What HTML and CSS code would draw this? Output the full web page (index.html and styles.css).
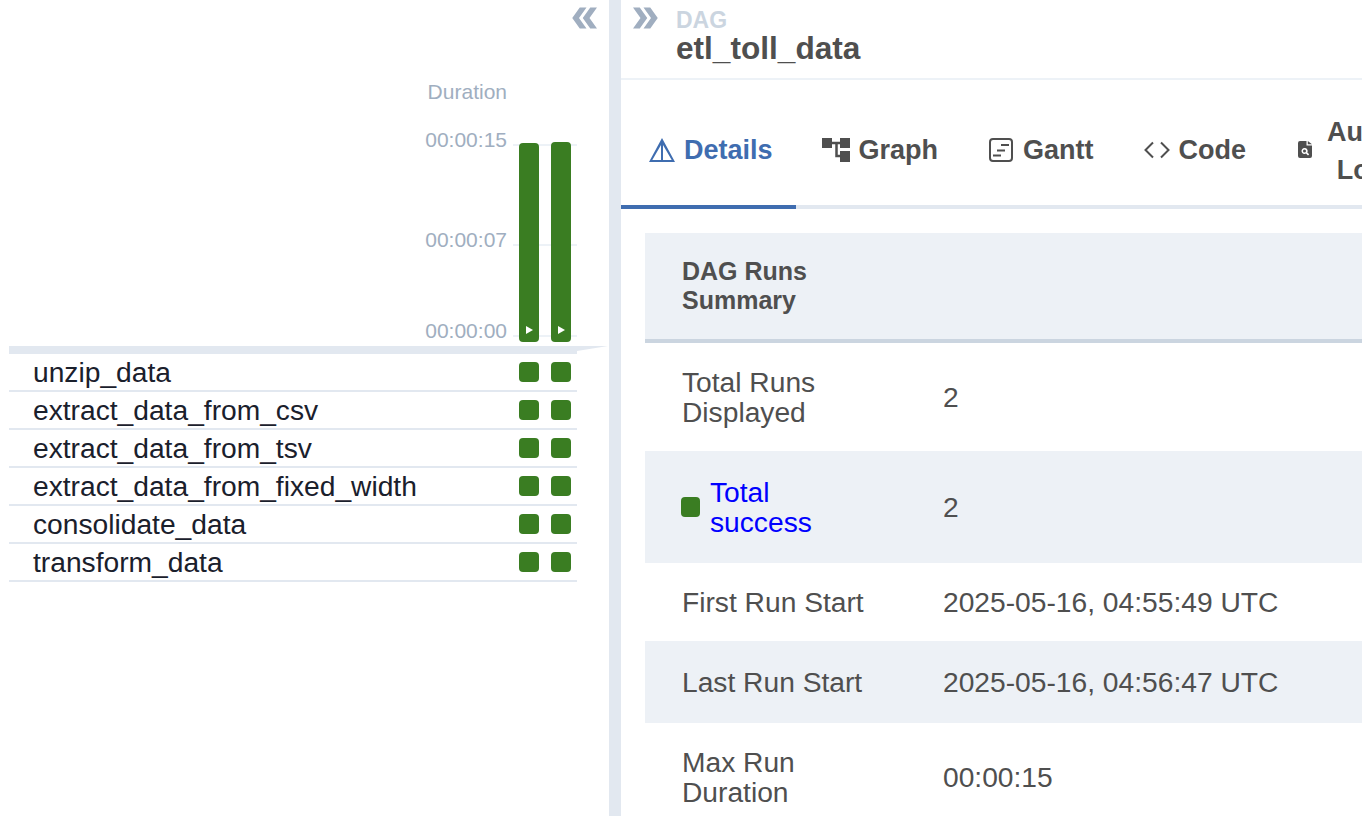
FILE: index.html
```html
<!DOCTYPE html>
<html lang="en">

<head>
  <meta charset="UTF-8">
  <link rel="stylesheet" href="styles.css">
  <title>etl_toll_data - Grid</title>
</head>

<body>
  <div class="app">
    <!-- Grid side -->
    <div class="left">
      <div class="left-top">
        <svg class="toggle flip" viewBox="0 0 24 24"><path d="M15.5 5H11l5 7-5 7h4.500l5-7z" /><path d="M8.500 5H4l5 7-5 7h4.500l5-7z" /></svg>
      </div>
      <div class="duration-title">Duration</div>
      <div class="chart">
        <div class="axis-line line-top"></div>
        <div class="axis-line line-mid"></div>
        <div class="axis-line line-bottom"></div>
        <div class="axis-labels">
          <span>00:00:15</span>
          <span class="tick-mid">00:00:07</span>
          <span class="tick-zero">00:00:00</span>
        </div>
        <div class="bars">
          <div class="bar bar-short"><span class="play"></span></div>
          <div class="bar"><span class="play"></span></div>
        </div>
      </div>
      <div class="band"><div class="band-tip"></div></div>
      <div class="task-row"><span class="task-name">unzip_data</span><span class="sq"></span><span class="sq"></span></div>
      <div class="task-row"><span class="task-name">extract_data_from_csv</span><span class="sq"></span><span class="sq"></span></div>
      <div class="task-row"><span class="task-name">extract_data_from_tsv</span><span class="sq"></span><span class="sq"></span></div>
      <div class="task-row"><span class="task-name">extract_data_from_fixed_width</span><span class="sq"></span><span class="sq"></span></div>
      <div class="task-row"><span class="task-name">consolidate_data</span><span class="sq"></span><span class="sq"></span></div>
      <div class="task-row"><span class="task-name">transform_data</span><span class="sq"></span><span class="sq"></span></div>
    </div>

    <div class="divider"></div>

    <!-- Details side -->
    <div class="right">
      <div class="header">
        <svg class="toggle" viewBox="0 0 24 24"><path d="M15.5 5H11l5 7-5 7h4.500l5-7z" /><path d="M8.500 5H4l5 7-5 7h4.500l5-7z" /></svg>
        <div class="title-block">
          <div class="dag-label">DAG</div>
          <div class="dag-name">etl_toll_data</div>
        </div>
      </div>

      <div class="tabs">
        <div class="tab active">
          <svg class="tab-icon" viewBox="0 0 26 24"><path fill-rule="evenodd" d="M13 0L0 24h26L13 0zm1 7l8.700 15H14V7zm-2 0v15H3.300L12 7z" /></svg>
          Details
        </div>
        <div class="tab">
          <svg class="tab-icon graph-icon" viewBox="0 0 28 24">
            <rect width="10" height="10" />
            <rect x="18" width="10" height="10" />
            <rect x="18" y="13" width="10" height="11" />
            <path class="link" d="M10 5h8M14.500 5v13h4" />
          </svg>
          Graph
        </div>
        <div class="tab">
          <svg class="tab-icon outline" viewBox="-1 0 26 24"><rect x="1" y="1" width="22" height="22" rx="3" /><path d="M12 7h8M8 12.500h8M4 17.500h8" /></svg>
          Gantt
        </div>
        <div class="tab">
          <svg class="tab-icon outline" viewBox="0 -4 26 24"><path d="M9 .5L1.500 8 9 15.500M17 .5L24.500 8 17 15.500" /></svg>
          Code
        </div>
        <div class="tab tab-wrap">
          <svg class="small-icon" viewBox="0 0 14 17"><path fill-rule="evenodd" d="M2 0h6.500v4.500H14V15a2 2 0 0 1-2 2H2a2 2 0 0 1-2-2V2a2 2 0 0 1 2-2zM6.500 7a3 3 0 1 0 1.500 5.600L10 14.500l1.200-1.200-1.900-1.800A3 3 0 0 0 6.500 7zm0 1.500a1.500 1.500 0 1 1 0 3 1.500 1.500 0 0 1 0-3zM9.800 0L14 3.300H9.800z" /></svg>
          <span class="wrap-label">Audit<br>Log</span>
        </div>
      </div>

      <table class="summary">
        <tr class="head-row">
          <th>DAG Runs<br>Summary</th>
          <th></th>
        </tr>
        <tr class="row-runs">
          <td>Total Runs<br>Displayed</td>
          <td>2</td>
        </tr>
        <tr class="shade row-success">
          <td>
            <div class="state-cell">
              <span class="sq"></span>
              <a href="#" class="state-link">Total<br>success</a>
            </div>
          </td>
          <td>2</td>
        </tr>
        <tr class="row-first">
          <td>First Run Start</td>
          <td>2025-05-16, 04:55:49 UTC</td>
        </tr>
        <tr class="shade row-last">
          <td>Last Run Start</td>
          <td>2025-05-16, 04:56:47 UTC</td>
        </tr>
        <tr>
          <td>Max Run<br>Duration</td>
          <td>00:00:15</td>
        </tr>
      </table>
    </div>
  </div>
</body>

</html>
```

FILE: styles.css
```css
html,
body {
  margin: 0;
  padding: 0;
  height: 100%;
  overflow: hidden;
  background-color: #ffffff;
  font-family: "Liberation Sans", Arial, sans-serif;
  color: #4f4f4f;
}

.app {
  display: flex;
  height: 816px;
  overflow: hidden;
}

.left {
  width: 568px;
  padding-left: 9px;
  padding-right: 32px;
  flex-shrink: 0;
}

.left-top {
  display: flex;
  justify-content: flex-end;
  height: 72px;
  margin-right: -26px;
}

.toggle {
  width: 36px;
  height: 36px;
  fill: #a0aec0;
  flex-shrink: 0;
}

.flip {
  transform: scaleX(-1);
}

.duration-title {
  width: 498px;
  text-align: right;
  font-size: 21px;
  line-height: 40px;
  color: #a0aec0;
}

.chart {
  position: relative;
  display: flex;
  height: 234px;
}

.axis-line {
  position: absolute;
  left: 504px;
  width: 64px;
  height: 2px;
  background-color: #edf2f7;
}

.line-top { top: 32px; }
.line-mid { top: 132px; }
.line-bottom { top: 223px; }

.axis-labels {
  width: 498px;
  padding-top: 15px;
  box-sizing: border-box;
  display: flex;
  flex-direction: column;
  align-items: flex-end;
  font-size: 21px;
  line-height: 25px;
  color: #a0aec0;
}

.tick-mid { margin-top: 75px; }
.tick-zero { margin-top: 66px; }

.bars {
  position: relative;
  display: flex;
  gap: 12px;
  margin-left: 12px;
  padding-top: 30px;
  height: 200px;
}

.bar {
  position: relative;
  width: 20px;
  height: 200px;
  background-color: #3a7d22;
  border-radius: 4px;
  display: flex;
  justify-content: center;
  align-items: flex-end;
}

.bar-short {
  height: 199px;
  margin-top: 1px;
}

.play {
  width: 0;
  height: 0;
  margin-bottom: 8px;
  margin-left: 1px;
  border-left: 7px solid #ffffff;
  border-top: 4px solid transparent;
  border-bottom: 4px solid transparent;
}

.band {
  position: relative;
  height: 8px;
  background-color: #e2e8f0;
}

.band-tip {
  position: absolute;
  left: 100%;
  top: 0;
  width: 0;
  height: 0;
  border-top: 5px solid #e2e8f0;
  border-right: 31px solid transparent;
}

.task-row {
  display: flex;
  align-items: center;
  height: 36px;
  border-bottom: 2px solid #e2e8f0;
}

.task-name {
  flex: 1;
  padding-left: 24px;
  font-size: 28.200px;
  color: #1a202c;
}

.sq {
  width: 20px;
  height: 20px;
  background-color: #3a7d22;
  border-radius: 4px;
  flex-shrink: 0;
}

.task-row .sq {
  margin-right: 6px;
  margin-left: 6px;
}

.divider {
  width: 12px;
  background-color: #e2e8f0;
  flex-shrink: 0;
}

.right {
  width: 741px;
  overflow: hidden;
  flex-shrink: 0;
}

.header {
  display: flex;
  height: 78px;
  padding-left: 6px;
  border-bottom: 2px solid #edf2f7;
}

.title-block {
  margin-left: 13px;
  padding-top: 8px;
}

.dag-label {
  font-size: 23px;
  font-weight: bold;
  line-height: 24px;
  color: #cbd5e0;
}

.dag-name {
  font-size: 31.600px;
  font-weight: bold;
  line-height: 33px;
}

.tabs {
  display: flex;
  height: 125px;
  border-bottom: 4px solid #e2e8f0;
}

.tab {
  display: flex;
  align-items: center;
  gap: 9px;
  height: 129px;
  padding: 16px 24px 0 26px;
  box-sizing: border-box;
  border-bottom: 4px solid transparent;
  font-size: 27px;
  font-weight: bold;
  white-space: nowrap;
}

.tab.active {
  padding-left: 28px;
  padding-right: 23px;
  color: #3f6db0;
  border-bottom-color: #3f6db0;
}

.tab-icon {
  width: 26px;
  height: 24px;
  margin-top: -2px;
  fill: currentColor;
}

.graph-icon {
  width: 28px;
}

.link {
  fill: none;
  stroke: currentColor;
  stroke-width: 2.500;
}

.tab-icon.outline {
  fill: none;
  stroke: currentColor;
  stroke-width: 2;
}

.small-icon {
  width: 14px;
  height: 17px;
  margin-top: -2px;
  fill: #4f4f4f;
  margin-left: 2px;
  margin-right: 6px;
}

.wrap-label {
  text-align: center;
  line-height: 38px;
}

.summary {
  margin: 24px 0 0 24px;
  width: 800px;
  border-collapse: collapse;
  font-size: 28.200px;
  line-height: 30px;
}

.summary th {
  text-align: left;
  font-size: 25px;
  line-height: 29px;
  padding: 24px 37px 24px;
  background-color: #edf1f6;
  border-bottom: 4px solid #cbd5e0;
}

.summary td {
  padding: 24px 37px;
  vertical-align: middle;
}

.summary td:first-child,
.summary th:first-child {
  width: 187px;
}

.shade td {
  background-color: #edf1f6;
}

.row-success td {
  padding: 26px 37px;
}

.row-last td {
  padding: 25.500px 37px 26px;
}

.state-cell {
  display: flex;
  align-items: center;
  gap: 10px;
  margin-left: -1px;
}

.state-cell .sq {
  width: 19px;
}

.state-link {
  color: #0000ff;
  text-decoration: none;
}
```
